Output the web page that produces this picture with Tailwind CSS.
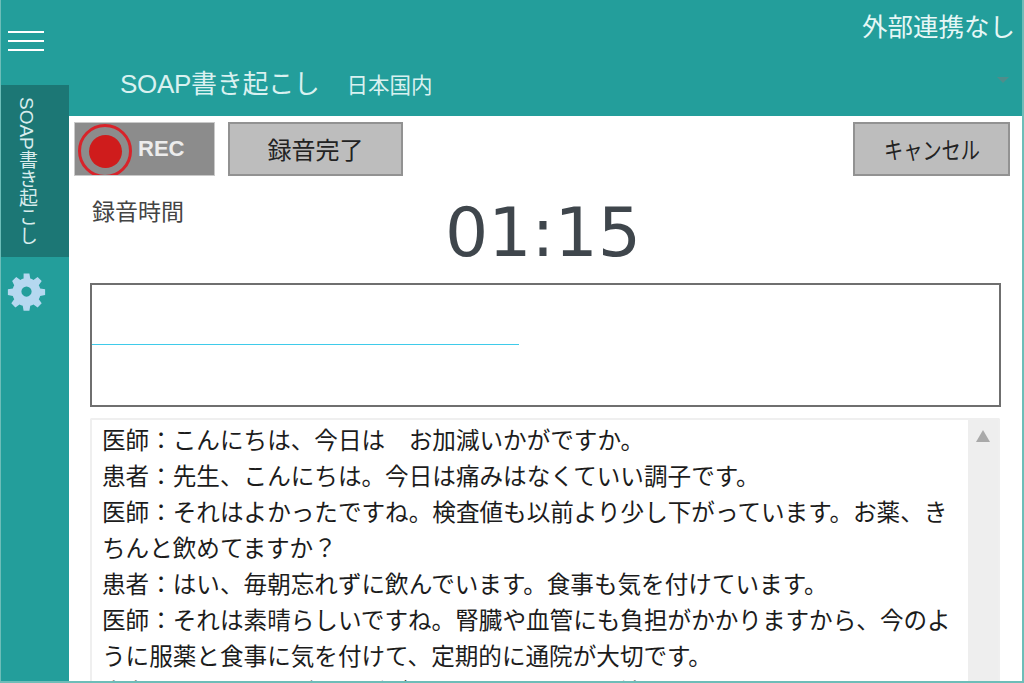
<!DOCTYPE html>
<html lang="ja">
<head>
  <meta charset="UTF-8" />
  <title>SOAP書き起こし</title>
  <script src="https://cdn.jsdelivr.net/npm/@tailwindcss/browser@4"></script>
</head>
<body class="w-[1024px] h-[683px] overflow-hidden bg-white font-['Noto_Sans_CJK_JP','Noto_Sans',sans-serif]">
  <div class="flex h-[683px] border-l border-r-2 border-b-2 border-[#6dbdb8]">
    <aside class="w-[68px] shrink-0 bg-[#239e9b] flex flex-col">
      <button class="h-[85px] pl-[7px] pt-[31px] flex flex-col gap-[7px]">
        <span class="block w-9 h-[2px] bg-white"></span>
        <span class="block w-9 h-[2px] bg-white"></span>
        <span class="block w-9 h-[2px] bg-white"></span>
      </button>
      <div class="h-[172px] bg-[#1c7775] flex justify-center pt-3 pr-[18px]">
        <span class="[writing-mode:vertical-rl] text-[19px] leading-[24px] text-[#d8ecec] whitespace-nowrap font-['Liberation_Sans','Noto_Sans_CJK_JP',sans-serif]">SOAP書き起こし</span>
      </div>
      <div class="pl-[5px] pt-[14px]">
        <svg class="w-[41px] h-[41px]" viewBox="0 0 24 24" fill="#b5d8f0">
          <path fill-rule="evenodd" d="M10.3 1.5h3.4l.5 2.9c.7.2 1.3.5 1.9.8l2.4-1.7 2.4 2.4-1.7 2.4c.3.6.6 1.2.8 1.9l2.9.5v3.4l-2.9.5c-.2.7-.5 1.3-.8 1.9l1.7 2.4-2.4 2.4-2.4-1.7c-.6.3-1.2.6-1.9.8l-.5 2.9h-3.4l-.5-2.9c-.7-.2-1.3-.5-1.9-.8l-2.4 1.7-2.4-2.4 1.7-2.4c-.3-.6-.6-1.2-.8-1.9l-2.9-.5v-3.4l2.9-.5c.2-.7.5-1.3.8-1.9L3.6 5.9 6 3.5l2.4 1.7c.6-.3 1.2-.6 1.9-.8zM12 9a3 3 0 1 0 0 6 3 3 0 0 0 0-6z"/>
        </svg>
      </div>
    </aside>

    <main class="flex-1 min-w-0 flex flex-col">
      <header class="h-[116px] shrink-0 bg-[#239e9b] relative text-white">
        <div class="text-right pr-[7px] pt-[7px] text-[25.5px] leading-[36px] text-[#e6f7f6]">外部連携なし</div>
        <div class="flex items-baseline pl-[51px] pt-[22px] text-[#d9f1f0]">
          <span class="text-[26px] leading-[38px] tracking-[-0.3px] font-['Liberation_Sans','Noto_Sans_CJK_JP',sans-serif]">SOAP書き起こし</span>
          <span class="ml-[27px] text-[21.5px] leading-[38px]">日本国内</span>
        </div>
        <span class="absolute right-[13px] top-[77px] w-0 h-0 border-x-[6px] border-x-transparent border-t-[6px] border-t-[#4f8d8b]"></span>
      </header>

      <div class="flex-1 min-h-0 flex flex-col pl-[5px] pr-[12px] pt-[6px]">
        <div class="flex items-start h-[54px]">
          <div class="w-[141px] h-[54px] bg-[#8c8c8c] border border-[#c9c9c9] flex items-start overflow-hidden">
            <span class="ml-[3px] mt-[1px] w-[54px] h-[54px] rounded-full border-[3px] border-[#d8232a] flex items-center justify-center shrink-0">
              <span class="w-[33px] h-[33px] rounded-full bg-[#cf1c1c]"></span>
            </span>
            <span class="ml-[6px] mt-[12px] text-[22px] leading-[28px] font-bold text-[#ececec] font-['Liberation_Sans',sans-serif]">REC</span>
          </div>
          <button class="ml-[13px] w-[175px] h-[54px] bg-[#bdbdbd] border-2 border-[#929292] text-[24px] text-[#222]">録音完了</button>
          <button class="ml-auto w-[157px] h-[54px] bg-[#bdbdbd] border-2 border-[#929292] text-[#222]">
            <span class="inline-block text-[24px] scale-x-[.8] whitespace-nowrap">キャンセル</span>
          </button>
        </div>

        <div class="relative h-[107px] shrink-0">
          <div class="absolute left-[18px] top-[17px] text-[23px] leading-[34px] text-[#444]">録音時間</div>
          <div class="text-center text-[68px] leading-[100px] text-[#3f464c] font-['DejaVu_Sans',sans-serif] pl-[2px] pt-[7px]">01:15</div>
        </div>

        <div class="ml-[16px] mr-[9px] h-[124px] shrink-0 border-2 border-[#6f6f6f]">
          <div class="w-[427px] h-[1px] bg-[#3fcbea] mt-[59px]"></div>
        </div>

        <div class="ml-[16px] mr-[10px] mt-[11px] flex-1 min-h-0 flex border-2 border-b-0 border-[#efefef] rounded-t-[2px] overflow-hidden">
          <div class="flex-1 min-w-0 pl-[10px] pt-[1px] text-[23.6px] leading-[36px] text-[#1c1c1c]">
            <p>医師：こんにちは、今日は　お加減いかがですか。</p>
            <p>患者：先生、こんにちは。今日は痛みはなくていい調子です。</p>
            <p>医師：それはよかったですね。検査値も以前より少し下がっています。お薬、き<br>ちんと飲めてますか？</p>
            <p>患者：はい、毎朝忘れずに飲んでいます。食事も気を付けています。</p>
            <p>医師：それは素晴らしいですね。腎臓や血管にも負担がかかりますから、今のよ<br>うに服薬と食事に気を付けて、定期的に通院が大切です。</p>
            <p>患者：はい、ありがとうございます。これからも続けていきます。</p>
          </div>
          <div class="w-[30px] shrink-0 bg-[#eeeeee] flex justify-center pt-[10px]">
            <span class="w-0 h-0 border-x-[7px] border-x-transparent border-b-[12px] border-b-[#a9a9a9]"></span>
          </div>
        </div>
      </div>
    </main>
  </div>
</body>
</html>
